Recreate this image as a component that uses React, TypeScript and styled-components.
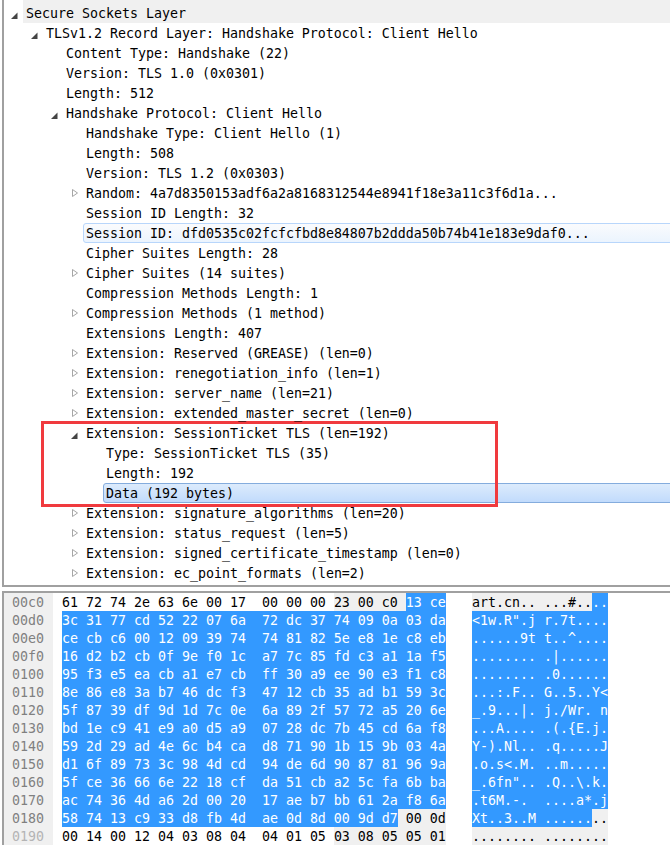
import styled, { createGlobalStyle } from "styled-components";

const GlobalStyle = createGlobalStyle`
  html, body {
    margin: 0;
    padding: 0;
    background: #fff;
  }
  body {
    font-family: "DejaVu Sans Mono", "Liberation Mono", monospace;
    font-size: 13.29px;
    color: #000;
  }
`;

type RowState = "hover" | "selected";
type Tone = "plain" | "field" | "selected";

interface TreeItem {
  level: number;
  text: string;
  arrow?: "open" | "closed";
  state?: RowState;
}

const TREE: TreeItem[] = [
  { level: 0, text: "Secure Sockets Layer", arrow: "open" },
  { level: 1, text: "TLSv1.2 Record Layer: Handshake Protocol: Client Hello", arrow: "open" },
  { level: 2, text: "Content Type: Handshake (22)" },
  { level: 2, text: "Version: TLS 1.0 (0x0301)" },
  { level: 2, text: "Length: 512" },
  { level: 2, text: "Handshake Protocol: Client Hello", arrow: "open" },
  { level: 3, text: "Handshake Type: Client Hello (1)" },
  { level: 3, text: "Length: 508" },
  { level: 3, text: "Version: TLS 1.2 (0x0303)" },
  { level: 3, text: "Random: 4a7d8350153adf6a2a8168312544e8941f18e3a11c3f6d1a...", arrow: "closed" },
  { level: 3, text: "Session ID Length: 32" },
  { level: 3, text: "Session ID: dfd0535c02fcfcfbd8e84807b2ddda50b74b41e183e9daf0...", state: "hover" },
  { level: 3, text: "Cipher Suites Length: 28" },
  { level: 3, text: "Cipher Suites (14 suites)", arrow: "closed" },
  { level: 3, text: "Compression Methods Length: 1" },
  { level: 3, text: "Compression Methods (1 method)", arrow: "closed" },
  { level: 3, text: "Extensions Length: 407" },
  { level: 3, text: "Extension: Reserved (GREASE) (len=0)", arrow: "closed" },
  { level: 3, text: "Extension: renegotiation_info (len=1)", arrow: "closed" },
  { level: 3, text: "Extension: server_name (len=21)", arrow: "closed" },
  { level: 3, text: "Extension: extended_master_secret (len=0)", arrow: "closed" },
  { level: 3, text: "Extension: SessionTicket TLS (len=192)", arrow: "open" },
  { level: 4, text: "Type: SessionTicket TLS (35)" },
  { level: 4, text: "Length: 192" },
  { level: 4, text: "Data (192 bytes)", state: "selected" },
  { level: 3, text: "Extension: signature_algorithms (len=20)", arrow: "closed" },
  { level: 3, text: "Extension: status_request (len=5)", arrow: "closed" },
  { level: 3, text: "Extension: signed_certificate_timestamp (len=0)", arrow: "closed" },
  { level: 3, text: "Extension: ec_point_formats (len=2)", arrow: "closed" },
];

type Segment = [string, Tone];

interface HexLine {
  offset: string;
  hex: Segment[];
  ascii: Segment[];
  dim?: boolean;
}

const line = (offset: string, hex: string, ascii: string): HexLine => ({
  offset,
  hex: [[hex, "selected"]],
  ascii: [[ascii, "selected"]],
});

const HEX_LINES: HexLine[] = [
  {
    offset: "00c0",
    hex: [
      ["61 72 74 2e 63 6e 00 17  00 00 00 ", "plain"],
      ["23 00 c0 ", "field"],
      ["13 ce", "selected"],
    ],
    ascii: [
      ["art.cn.. ...#..", "field"],
      ["..", "selected"],
    ],
  },
  line("00d0", "3c 31 77 cd 52 22 07 6a  72 dc 37 74 09 0a 03 da", '<1w.R".j r.7t....'),
  line("00e0", "ce cb c6 00 12 09 39 74  74 81 82 5e e8 1e c8 eb", "......9t t..^...."),
  line("00f0", "16 d2 b2 cb 0f 9e f0 1c  a7 7c 85 fd c3 a1 1a f5", "........ .|......"),
  line("0100", "95 f3 e5 ea cb a1 e7 cb  ff 30 a9 ee 90 e3 f1 c8", "........ .0......"),
  line("0110", "8e 86 e8 3a b7 46 dc f3  47 12 cb 35 ad b1 59 3c", "...:.F.. G..5..Y<"),
  line("0120", "5f 87 39 df 9d 1d 7c 0e  6a 89 2f 57 72 a5 20 6e", "_.9...|. j./Wr. n"),
  line("0130", "bd 1e c9 41 e9 a0 d5 a9  07 28 dc 7b 45 cd 6a f8", "...A.... .(.{E.j."),
  line("0140", "59 2d 29 ad 4e 6c b4 ca  d8 71 90 1b 15 9b 03 4a", "Y-).Nl.. .q.....J"),
  line("0150", "d1 6f 89 73 3c 98 4d cd  94 de 6d 90 87 81 96 9a", ".o.s<.M. ..m....."),
  line("0160", "5f ce 36 66 6e 22 18 cf  da 51 cb a2 5c fa 6b ba", '_.6fn".. .Q..\\.k.'),
  line("0170", "ac 74 36 4d a6 2d 00 20  17 ae b7 bb 61 2a f8 6a", ".t6M.-.  ....a*.j"),
  {
    offset: "0180",
    hex: [
      ["58 74 13 c9 33 d8 fb 4d  ae 0d 8d 00 9d d7", "selected"],
      [" 00 0d", "field"],
    ],
    ascii: [
      ["Xt..3..M ......", "selected"],
      ["..", "field"],
    ],
  },
  {
    offset: "0190",
    dim: true,
    hex: [
      ["00 14 00 12 04 03 08 04  04 01 05 ", "plain"],
      ["03 08 05 05 01", "field"],
    ],
    ascii: [["........ ........", "field"]],
  },
];

const Page = styled.div`
  position: relative;
  width: 670px;
  height: 846px;
  overflow: hidden;
`;

const TreePanel = styled.section`
  height: 587px;
  margin-left: 2px;
  box-sizing: border-box;
  border-left: 2px solid #a0a0a0;
  border-bottom: 2px solid #a0a0a0;
  overflow: hidden;
`;

const TreeRow = styled.div<{ $level: number; $root: boolean }>`
  display: flex;
  height: ${(p) => (p.$root ? 23 : 20)}px;
  margin-left: ${(p) => p.$level * 20}px;
`;

const ArrowSlot = styled.svg`
  flex: none;
  width: 19px;
  height: 20px;
  align-self: flex-end;
`;

const hoverStyle = `
  border: 1px solid #b8d6fb;
  background: linear-gradient(#fafbfd, #ebf4fe);
`;

const selectedStyle = `
  border: 1px solid #84acdd;
  background: linear-gradient(#dcebfc, #c1dbfc);
`;

// plain labels sit above the red box so the low underscores stay visible
const RowLabel = styled.div<{ $root: boolean; $state?: RowState }>`
  flex: 1;
  box-sizing: border-box;
  margin-right: -4px;
  padding: ${(p) => (p.$root ? "3px 0 0 3px" : "0 0 0 3px")};
  line-height: 22px;
  white-space: pre;
  background: ${(p) => (p.$root ? "#f0f0f0" : "transparent")};
  ${(p) => !p.$state && "position: relative; z-index: 1;"}
  ${(p) => p.$state && "padding-left: 2px; line-height: 20px; border-radius: 3px 0 0 3px;"}
  ${(p) => p.$state === "hover" && hoverStyle}
  ${(p) => p.$state === "selected" && selectedStyle}
`;

const HexPanel = styled.section`
  margin: 4px 0 0 2px;
  border-left: 2px solid #a0a0a0;
  border-top: 2px solid #a0a0a0;
`;

const HexRow = styled.div`
  display: flex;
  height: 18px;
  line-height: 20px;
  white-space: pre;
`;

const Offset = styled.div<{ $dim?: boolean }>`
  flex: none;
  width: 41px;
  padding-left: 8px;
  margin-right: 9px;
  background: #f0f0f0;
  color: ${(p) => (p.$dim ? "#b4b4b4" : "#808080")};
`;

const HexCell = styled.div`
  flex: none;
  width: 384px;
  margin-right: 26px;
  display: flex;
`;

const AsciiCell = styled.div`
  flex: none;
  width: 136px;
  display: flex;
`;

const Bytes = styled.span<{ $tone: Tone }>`
  color: ${(p) => (p.$tone === "selected" ? "#fff" : "#000")};
  background: ${(p) =>
    p.$tone === "selected" ? "#3399ff" : p.$tone === "field" ? "#f0f0f0" : "transparent"};
`;

const RedBox = styled.div`
  position: absolute;
  left: 41px;
  top: 421px;
  width: 457px;
  height: 86px;
  box-sizing: border-box;
  border: 3px solid #f03a3e;
  pointer-events: none;
`;

const Arrow = ({ kind }: { kind?: "open" | "closed" }) => (
  <ArrowSlot viewBox="0 0 19 20">
    {kind === "open" && <polygon points="7,16 13.5,16 13.5,9.5" fill="#444" />}
    {kind === "closed" && (
      <polygon points="8.5,6.5 8.5,13.5 13.5,10" fill="#fff" stroke="#a6a6a6" strokeWidth="1" />
    )}
  </ArrowSlot>
);

const renderSegments = (segments: Segment[]) =>
  segments.map(([text, tone], i) => (
    <Bytes key={i} $tone={tone}>
      {text}
    </Bytes>
  ));

function App() {
  return (
    <Page>
      <GlobalStyle />
      <TreePanel>
        {TREE.map((item, i) => (
          <TreeRow key={i} $level={item.level} $root={i === 0}>
            <Arrow kind={item.arrow} />
            <RowLabel $root={i === 0} $state={item.state}>
              {item.text}
            </RowLabel>
          </TreeRow>
        ))}
      </TreePanel>
      <HexPanel>
        {HEX_LINES.map((row) => (
          <HexRow key={row.offset}>
            <Offset $dim={row.dim}>{row.offset}</Offset>
            <HexCell>{renderSegments(row.hex)}</HexCell>
            <AsciiCell>{renderSegments(row.ascii)}</AsciiCell>
          </HexRow>
        ))}
      </HexPanel>
      <RedBox />
    </Page>
  );
}

export default App;
